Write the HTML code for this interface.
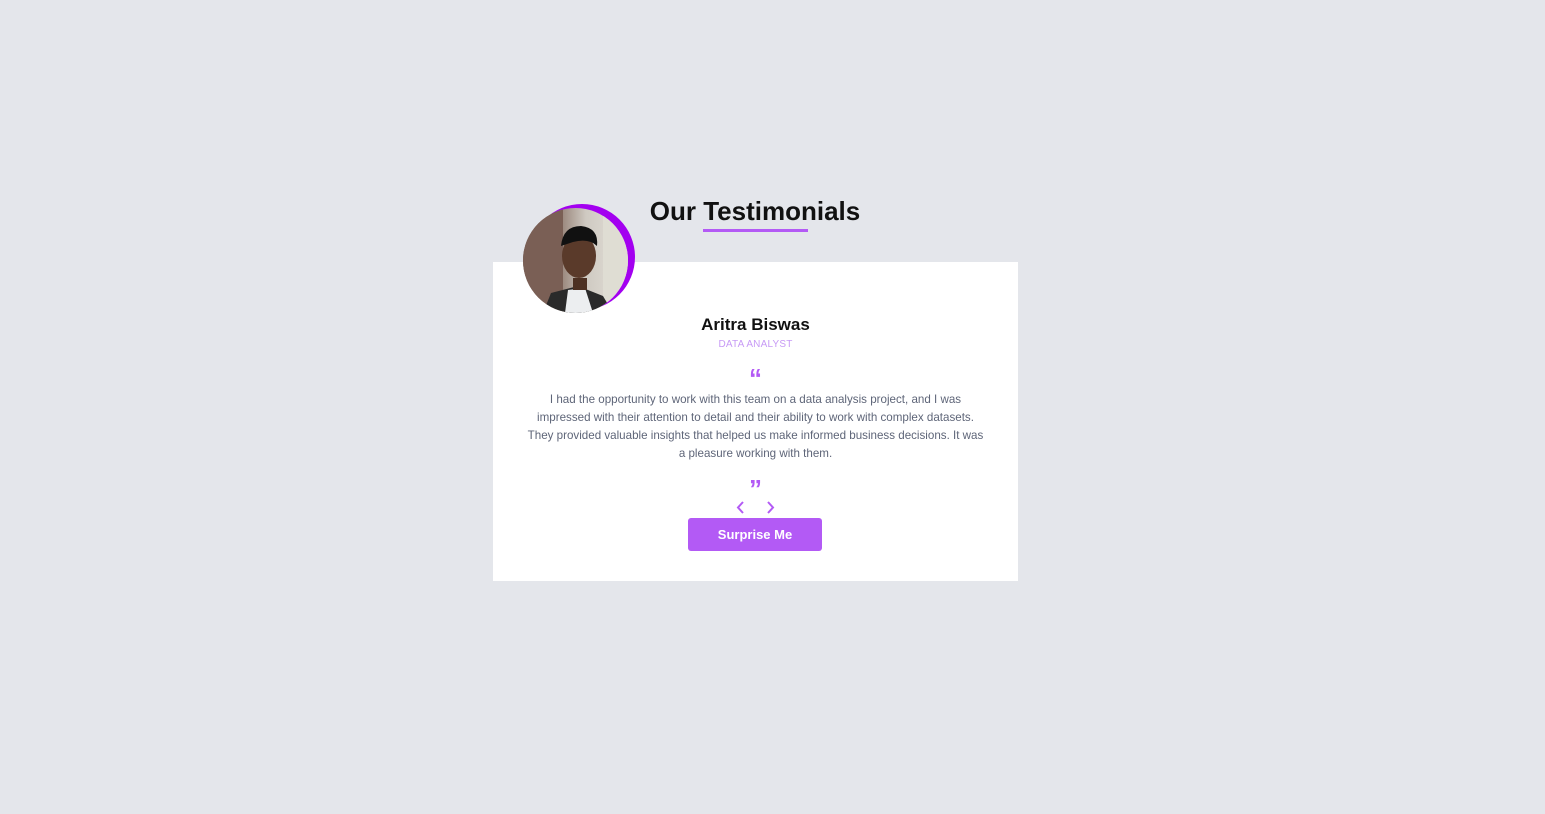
<!DOCTYPE html>
<html><head><meta charset="utf-8"><style>
body{margin:0;background:#e4e6eb;font-family:"Liberation Sans",sans-serif;width:1545px;height:814px;position:relative;overflow:hidden}
.title{position:absolute;left:0;width:1510px;text-align:center;top:196px;font-size:26px;font-weight:bold;color:#111}
.uline{position:absolute;left:703px;top:229px;width:105px;height:3px;background:#b35af5}
.card{position:absolute;left:493px;top:262px;width:525px;height:319px;background:#fff}
.ring{position:absolute;left:529px;top:204px;width:106px;height:106px;border-radius:50%;background:#a300f0}
.av{position:absolute;left:523px;top:208px;width:105px;height:105px;border-radius:50%;overflow:hidden;background:linear-gradient(90deg,#6d5650 0%,#8a7368 30%,#cfcac2 60%,#e5e2da 100%)}
.c{position:absolute;left:493px;width:525px;text-align:center}
.name{top:315px;font-size:17px;font-weight:bold;color:#111}
.job{top:339px;font-size:10px;color:#c79af5;letter-spacing:.2px}
.q{font-size:26px;font-weight:bold;color:#b35af5;font-family:"Liberation Sans",sans-serif;line-height:20px}
.txt{top:391px;left:523px;width:465px;font-size:11.6px;line-height:18px;color:#5e6578}
.btn{position:absolute;left:688px;top:518px;width:134px;height:33px;border-radius:3px;background:#b35af5;color:#fff;font-weight:bold;font-size:13px;text-align:center;line-height:33px}
</style></head><body>
<div class="title">Our Testimonials</div>
<div class="uline"></div>
<div class="card"></div>
<div class="ring"></div>
<div class="av"><svg width="105" height="105" viewBox="0 0 105 105">
<rect x="0" y="0" width="40" height="105" fill="#7a5f55"/>
<rect x="80" y="0" width="25" height="105" fill="#dfddd3"/>
<path d="M20 105 L28 85 L55 78 L80 88 L90 105Z" fill="#2a2a2a"/>
<path d="M42 105 L45 82 L62 80 L70 105Z" fill="#eceef0"/>
<ellipse cx="56" cy="48" rx="17" ry="22" fill="#5a3a2a"/>
<path d="M38 38 Q40 18 58 18 Q76 20 74 38 Q66 30 50 34Z" fill="#111"/>
<rect x="50" y="70" width="14" height="12" fill="#4d3123"/>
</svg></div>
<div class="c name">Aritra Biswas</div>
<div class="c job">DATA ANALYST</div>
<div class="c q" style="top:368px">“</div>
<div class="c txt">I had the opportunity to work with this team on a data analysis project, and I was impressed with their attention to detail and their ability to work with complex datasets. They provided valuable insights that helped us make informed business decisions. It was a pleasure working with them.</div>
<div class="c q" style="top:479px">”</div>
<svg style="position:absolute;left:733px;top:500px" width="45" height="15"><path d="M10 2 L5 7.5 L10 13" stroke="#b35af5" stroke-width="2" fill="none"/><path d="M35 2 L40 7.5 L35 13" stroke="#b35af5" stroke-width="2" fill="none"/></svg>
<div class="btn">Surprise Me</div>
</body></html>
